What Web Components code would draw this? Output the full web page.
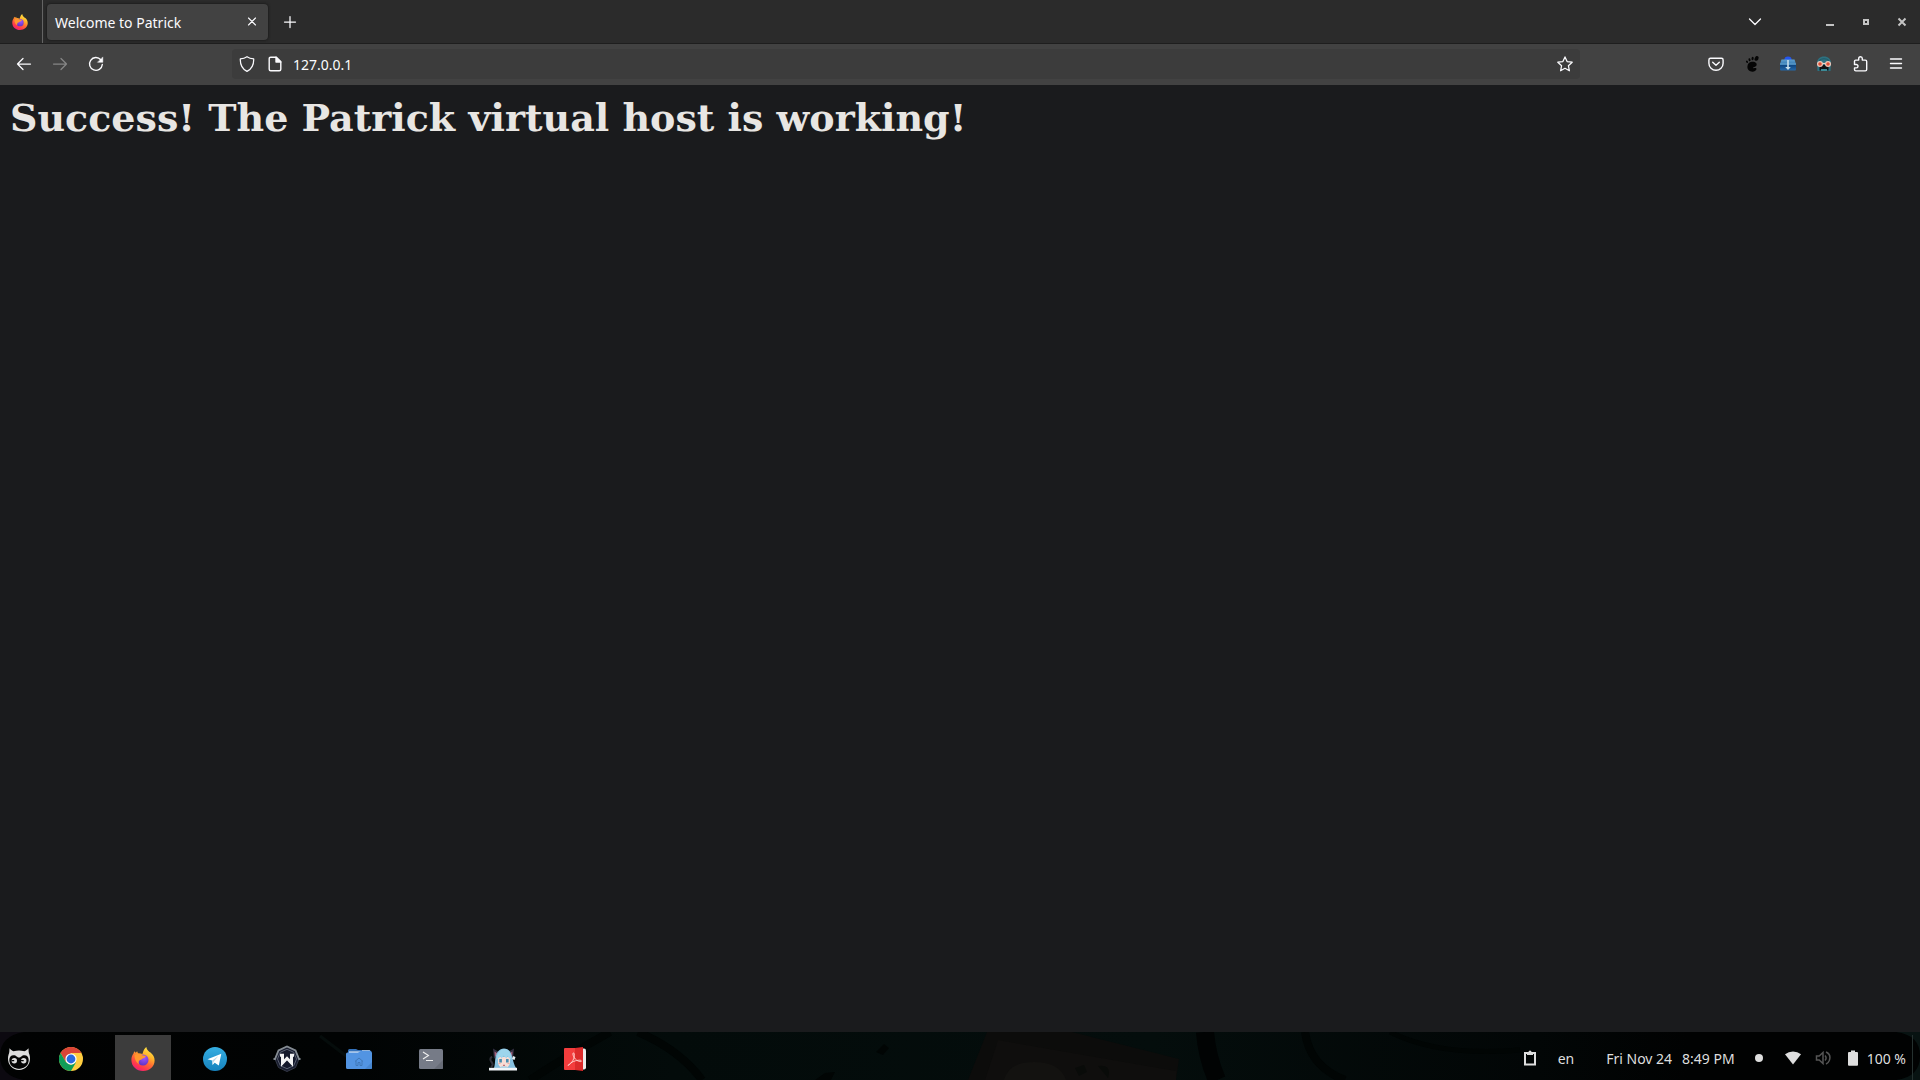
<!DOCTYPE html>
<html lang="en">
<head>
<meta charset="utf-8">
<title>Welcome to Patrick</title>
<style>
html, body { margin: 0; height: 100%; }
body { background: #1a1b1d; font-family: "Noto Sans", sans-serif; font-size: 14px; line-height: 20px; color: #fbfbfe; overflow: hidden; }
</style>
</head>
<body>
<desk-top></desk-top>
<script>
const ICONS = {
  firefox: `<svg viewBox="0 0 24 24"><defs>
    <linearGradient id="f" x1=".85" y1="0" x2=".3" y2="1"><stop offset="0" stop-color="#fff44f"/><stop offset=".35" stop-color="#ffb42a"/><stop offset=".6" stop-color="#ff6a33"/><stop offset=".85" stop-color="#ff3350"/><stop offset="1" stop-color="#e9207e"/></linearGradient>
    <radialGradient id="p" cx=".6" cy=".3" r=".7"><stop offset="0" stop-color="#a056ff"/><stop offset="1" stop-color="#6133c4"/></radialGradient></defs>
    <path fill="url(#f)" d="M15.3 0c.5 2.8 1.7 3.7 3.2 5.1l1 .5c2.6 2.1 4.1 4.4 4.1 8 0 6.2-5.1 10.4-11.6 10.4S.4 19.300.4 13c0-3 .8-5 2.200-6.800l.6-2 1.500 1.500 1.400-1.500.9 2c1.800-.1 3.100.2 4.300.8 1-1.400.8-4.400 4-7z"/>
    <circle cx="12" cy="13" r="5.500" fill="url(#p)"/>
    <path fill="#ff982e" d="M3.500 8.500c2-1.800 5.700-2 7.700-.2l3.700.7c-.4 1.700-2.400 1.900-3.600 2.700-.8 1.100-2.600.9-3.300 2.400-.5 1-.4 2 .2 2.800-2.500-.7-4.600-4.200-4.700-8.400z"/></svg>`,
  back: `<svg viewBox="0 0 16 16" fill="none" stroke="currentColor" stroke-width="1.250" stroke-linecap="round" stroke-linejoin="round"><path d="M14.500 8H1.500M7 2.500 1.500 8 7 13.500"/></svg>`,
  forward: `<svg viewBox="0 0 16 16" fill="none" stroke="currentColor" stroke-width="1.250" stroke-linecap="round" stroke-linejoin="round"><path d="M1.500 8h13M9 2.500 14.500 8 9 13.500"/></svg>`,
  reload: `<svg viewBox="0 0 16 16" fill="none" stroke="currentColor" stroke-width="1.400" stroke-linecap="round"><path d="M14.300 8.500A6.400 6.400 0 1 1 12.800 3.800"/><path d="M14.800 1.300v5h-5z" fill="currentColor" stroke-width=".5"/></svg>`,
  shield: `<svg viewBox="0 0 16 16" fill="none" stroke="currentColor" stroke-width="1.250" stroke-linejoin="round"><path d="M8 .7c2 1.400 4.300 2 6.700 2.200C14.900 8.400 13.300 12.600 8 15.400 2.700 12.600 1.100 8.400 1.300 2.900 3.700 2.700 6 2.100 8 .7z"/></svg>`,
  page: `<svg viewBox="0 0 16 16" fill="none" stroke="currentColor" stroke-width="1.400" stroke-linejoin="round"><path d="M3.700 1.200h5.600l4.500 4.500v7.600q0 1.500-1.500 1.500H3.700q-1.500 0-1.500-1.500V2.700q0-1.500 1.500-1.500z"/><path d="M9 1.200v4.800h4.800z" fill="currentColor"/></svg>`,
  star: `<svg viewBox="0 0 16 16" fill="none" stroke="currentColor" stroke-width="1.250" stroke-linejoin="round"><path d="m8 .9 2.100 4.700 5.100.6-3.800 3.500 1 5.100L8 12.300l-4.400 2.500 1-5.100L.8 6.200l5.100-.6z"/></svg>`,
  close: `<svg viewBox="0 0 16 16" fill="none" stroke="currentColor" stroke-width="1.100" stroke-linecap="round"><path d="m4.500 4 7 7M11.500 4l-7 7"/></svg>`,
  plus: `<svg viewBox="0 0 16 16" fill="none" stroke="currentColor" stroke-width="1.250" stroke-linecap="round"><path d="M8 2.500v11M2.500 8h11"/></svg>`,
  chevron: `<svg viewBox="0 0 16 16" fill="none" stroke="currentColor" stroke-width="1.300" stroke-linecap="round" stroke-linejoin="round"><path d="m2.500 5 5.500 5.500L13.500 5"/></svg>`,
  minimize: `<svg viewBox="0 0 16 16" fill="currentColor"><path d="M4 10h8v2H4z"/></svg>`,
  maximize: `<svg viewBox="0 0 16 16" fill="none" stroke="currentColor" stroke-width="2"><path d="M6 6h4v4H6z"/></svg>`,
  quit: `<svg viewBox="0 0 16 16" fill="none" stroke="currentColor" stroke-width="2"><path d="m4.500 4.500 7 7M11.500 4.500l-7 7"/></svg>`,
  pocket: `<svg viewBox="0 0 16 16" fill="none" stroke="currentColor" stroke-width="1.400" stroke-linecap="round" stroke-linejoin="round"><path d="M2.500 2.300h11q1.600 0 1.600 1.600v3.300a7.100 7.100 0 0 1-14.200 0V3.900q0-1.600 1.600-1.600z"/><path d="M4.700 6.200 8 9.300l3.300-3.100"/></svg>`,
  foot: `<svg viewBox="0 0 16 16" fill="#050505"><path d="M7.800 5.800c3.400-.3 5.900 1.500 4.500 3.900-.9 1.500-3.200 1-3.200 2.100 0 .9 2.200-.4 3.100.4 1 1-.8 3.400-3.400 3.500-3.400.1-5.500-2-5.400-4.900.1-2.900 1.700-4.800 4.400-5z"/><ellipse cx="12.600" cy="2.400" rx="1.800" ry="2.500" transform="rotate(25 12.600 2.400)"/><ellipse cx="8.600" cy="2.500" rx="1.100" ry="1.700" transform="rotate(5 8.600 2.500)"/><ellipse cx="5.500" cy="3.800" rx="1" ry="1.500" transform="rotate(-15 5.500 3.800)"/><ellipse cx="3" cy="5.800" rx=".9" ry="1.300" transform="rotate(-30 3 5.800)"/></svg>`,
  download: `<svg viewBox="0 0 16 16"><defs><linearGradient id="d" x2="0" y2="1"><stop stop-color="#5f9fce"/><stop offset=".45" stop-color="#3379b4"/><stop offset=".5" stop-color="#0c4480"/><stop offset="1" stop-color="#2468a8"/></linearGradient></defs><ellipse cx="8" cy="3.500" rx="3.600" ry="3" fill="#2456ee"/><path d="M1.500 3.500h13L16 8v5.500q0 1-1 1H1q-1 0-1-1V8z" fill="url(#d)"/><path d="M0 8h16" stroke="#7ab4d8" stroke-width=".7"/><path d="M7.200 4h1.600v7h2L8 14l-2.800-3h2z" fill="#c6deec"/></svg>`,
  mask: `<svg viewBox="0 0 16 16"><path d="M1 7c0-4 3-6.500 7-6.500S15 3 15 7l-.5 8H1.500z" fill="#2d7180"/><path d="M3 4.500Q8 1 13 4.500" fill="none" stroke="#205866"/><path d="M3.500 9h9v5.500h-9z" fill="#101316"/><path d="M5 13h6v2H5z" fill="#3d8a96"/><circle cx="4" cy="8" r="3" fill="#efc9bb"/><circle cx="12" cy="8" r="3" fill="#efc9bb"/><circle cx="4" cy="8" r="1.800" fill="#df4f36"/><circle cx="12" cy="8" r="1.800" fill="#df4f36"/><path d="M6.800 7.500h2.400" stroke="#f0d5c8" stroke-width="1.200"/></svg>`,
  puzzle: `<svg viewBox="0 0 16 16" fill="none" stroke="currentColor" stroke-width="1.400" stroke-linejoin="round"><path d="M2.500 5.300q0-1.200 1.200-1.200h3V2.600a1.800 1.800 0 0 1 3.600 0v1.500h3q1.400 0 1.400 1.400v8q0 1.400-1.400 1.400H3.800q-1.300 0-1.300-1.300v-1.700h1.800a1.700 1.700 0 0 0 0-3.400H2.500z"/></svg>`,
  menu: `<svg viewBox="0 0 16 16" fill="none" stroke="currentColor" stroke-width="1.400" stroke-linecap="round"><path d="M2.500 3h11M2.500 7.500h11M2.500 12h11"/></svg>`,
  cat: `<svg viewBox="0 0 24 24"><path fill="#dedede" d="M2.500 1.200c1.300 1.200 2.300 2.600 4.100 3Q12 2.600 17.400 4.200c1.800-.4 2.800-1.800 4.100-3 .2 2.200-.1 4.300.9 6.300C24.800 15 20 23 12 23S-.8 15 1.600 7.500c1-2 .7-4.100.9-6.300z"/><path d="M2.300 13c0-3 1.700-4.700 4.200-4.700 3 0 3.500 2.300 5.500 2.300s2.500-2.300 5.500-2.300c2.500 0 4.200 1.700 4.200 4.700 0 5.200-4.200 8.700-9.700 8.700S2.300 18.200 2.300 13z" fill="#050505"/><path d="M2.800 16Q5.500 21.400 12 21.400t9.200-5.400Q18 19.400 12 19.400T2.800 16z" fill="#050505"/><circle cx="7.300" cy="13.800" r="2.700" fill="#dedede"/><circle cx="16.700" cy="13.800" r="2.700" fill="#dedede"/><path d="M4.500 13.600h2.700M14 13.600h2.700" stroke="#050505" stroke-width="1.400"/></svg>`,
  chrome: `<svg viewBox="0 0 24 24"><circle cx="12" cy="12" r="12" fill="#ffcd40"/><path d="M12 6h10.400A12 12 0 0 0 1.600 6l5.200 9z" fill="#db4437"/><path d="M1.600 6A12 12 0 0 0 12 24l5.200-9-5.200 3-5.200-3z" fill="#0f9d58"/><circle cx="12" cy="12" r="5.600" fill="#fff"/><circle cx="12" cy="12" r="4.400" fill="#2a6ae0"/></svg>`,
  telegram: `<svg viewBox="0 0 24 24"><defs><linearGradient id="t" x2="0" y2="1"><stop stop-color="#35aee2"/><stop offset="1" stop-color="#1682bd"/></linearGradient></defs><circle cx="12" cy="12" r="12" fill="url(#t)"/><path d="m4.500 12.200 13.800-5.400-2.500 11.700-4.100-2.700-2.200 2.100-.3-4.300z" fill="#fff"/><path d="m9.200 13.600 6.200-4.500-4.800 5.600-1.100 3.200z" fill="#b8d6e7"/></svg>`,
  windscribe: `<svg viewBox="0 0 28 28"><path d="m5.500 5.500 8.500-4 8.500 4 3.500 8.500-3.500 8.500-8.500 4-8.500-4L2 14z" fill="#181c2e" stroke="#343947"/><path d="M.5 14H2l3.500-8.500 8.500-4 8.500 4L26 14h1.500" fill="none" stroke="#848b92" stroke-width="1.800"/><path d="M4.500 14 7.300 7.300 14 4.300l6.700 3 2.800 6.700-2.800 6.700-6.700 3-6.700-3z" fill="#14182a" stroke="#596070"/><path d="M7 10.300h2.500v7.700l4.500-4.700 4.500 4.700v-7.700H21" fill="none" stroke="#f2f2f2" stroke-width="3"/></svg>`,
  folder: `<svg viewBox="0 0 26 22"><path d="M2 2.500Q2 1 3.500 1H10l2 1h11q2 0 2 2v5H2z" fill="#3472bb"/><path d="M3 3.500h13V2.600h8v5H3z" fill="#f3f7fc"/><path d="M0 6q0-1.500 1.500-1.500H12l3-1.500h9q2 0 2 2v14.500q0 1.500-1.500 1.500h-23Q0 21 0 19.500z" fill="#5294e2"/><path d="m19 21 7-7v5.500q0 1.500-1.500 1.500z" fill="#4786d0"/><path d="m9 13.500 4-3.500 4 3.500M10 12.800v4.700h2v-3h2v3h2v-4.700" fill="none" stroke="#4078b8" stroke-width="1"/></svg>`,
  terminal: `<svg viewBox="0 0 26 22"><rect x="1" y="1" width="24" height="20" rx="1.500" fill="#767b87"/><path d="m16 21 9-9v7.500q0 1.500-1.500 1.500z" fill="#686d78"/><path d="m5 4 5.500 3.500L5 11M8 12.500h7" fill="none" stroke="#f0f0f0" stroke-width="1.100"/></svg>`,
  anime: `<svg viewBox="0 0 28 24"><path d="M4 1.500 10 5l-5 7zM25 1.500 19 5l5 7z" fill="#342f42"/><path d="m5.500 4.500 3 2L6 10zM23.500 4.500l-3 2L23 10z" fill="#a8607a"/><path d="M2 20q3-2 .5-5T3 9.500" fill="none" stroke="#303039" stroke-width="2"/><path d="M5 21C7 15 5 9 9 4.500c3-4 9-4 12 0 3 5 2.500 10.500 6 16.500z" fill="#86c0df"/><path d="M9 10h12v6q-1 5-6 5t-6-5z" fill="#f8ddd5"/><path d="M7.500 13C8 5 12 2 15.500 2S22.500 5 22.500 13l-3-2.500-1-2-1 3-3-3-2 3.200-1-2.200z" fill="#9dd5ec"/><path d="M10.300 12h2.600v3.500h-2.600zM17 12h2.600v3.500H17z" fill="#4a8dae"/><path d="M9.500 16.500h2M18.500 16.500h2" stroke="#efaba5"/><path d="M14 18.300h2" stroke="#b8545e"/><path d="m24 9 2.500 1-1 3-2.500-1z" fill="#e4edf2"/><path d="M11 21q1-2.500 4-1.500 3-1 4 1.500z" fill="#a5cde1"/><path d="M0 20.800h28v2.700H0z" fill="#f1f5f8"/></svg>`,
  pdf: `<svg viewBox="0 0 24 24"><path d="M18 1.500h3q2 0 2 2v17q0 2-2 2h-3z" fill="#ececec"/><path d="M1 2q0-1 1-1h10v22H2q-1 0-1-1z" fill="#f33d3d"/><path d="m12 1 8-1v24l-8-1z" fill="#dc2b2b"/><path d="M5 18.500c4-2.200 7-7.500 6.200-11.500-.3-2-1.900-1.200-1.100 1.200 1.200 4 5 6.500 7.700 6.400 1.200-.2.700-1.400-1-1.400-3.900 0-8.500 1.500-11.800 5.300z" fill="none" stroke="#ffd7d4" stroke-width=".9"/></svg>`,
  clipboard: `<svg viewBox="0 0 16 16" fill="none" stroke="currentColor"><path d="M3 3h10v11.500H3z" stroke-width="2"/><path d="M5 2h1.500a1.500 1.500 0 0 1 3 0H11v3H5z" fill="currentColor" stroke="none"/></svg>`,
  dot: `<svg viewBox="0 0 16 16"><circle cx="8" cy="8" r="4" fill="currentColor"/></svg>`,
  wifi: `<svg viewBox="0 0 16 16"><path d="M0 4.300Q3.500 1.500 8 1.500t8 2.800L8 14.500z" fill="currentColor"/></svg>`,
  volume: `<svg viewBox="0 0 16 16" fill="none" stroke="#555" stroke-width="1.500"><path d="M1.500 6h2.700L8 2.500v11L4.200 10H1.500zM10 5.500q2.200 2.500 0 5M11 2q5.500 2.500 3.300 8.500Q13.300 13 11 14"/></svg>`,
  battery: `<svg viewBox="0 0 16 16"><path d="M6 .5h4V2h2q1 0 1 1v12q0 .8-1 .8H4q-1 0-1-.8V3q0-1 1-1h2z" fill="currentColor"/></svg>`
};

function define(name, html, setup) {
  const template = document.createElement("template");
  template.innerHTML = html;
  customElements.define(name, class extends HTMLElement {
    constructor() {
      super();
      this.attachShadow({ mode: "open" }).append(template.content.cloneNode(true));
    }
    connectedCallback() { if (setup) setup(this, this.shadowRoot); }
  });
}

define("ui-icon", `<style>
  :host { display: block; width: var(--icon-size, 16px); height: var(--icon-size, 16px); flex: none; }
  div, svg { display: block; width: 100%; height: 100%; }
</style><div></div>`, (el, root) => {
  root.querySelector("div").innerHTML = ICONS[el.getAttribute("name")].replace("<svg", '<svg aria-hidden="true"');
});

define("icon-button", `<style>
  :host { display: flex; width: 36px; flex: none; }
  button { all: unset; box-sizing: border-box; display: grid; place-items: center; width: 100%; height: 100%; color: inherit; }
  button:focus-visible { outline: 1px solid #8ab4f8; outline-offset: -2px; }
  :host([dim]) { color: #858585; }
</style><button type="button"></button>`, (el, root) => {
  const icon = document.createElement("ui-icon");
  icon.setAttribute("name", el.getAttribute("icon"));
  const button = root.querySelector("button");
  button.setAttribute("aria-label", el.getAttribute("label"));
  if (el.hasAttribute("dim")) button.disabled = true;
  button.replaceChildren(icon);
});

define("tab-strip", `<style>
  :host { display: flex; height: 44px; box-sizing: border-box; background: #2b2b2b; border-bottom: 1px solid #1e1e1e; }
  .home { display: grid; place-items: center; width: 40px; padding-right: 2px; border-right: 1px solid #646464; }
  .tab { display: flex; align-items: center; box-sizing: border-box; width: 221px; height: 36px; margin: 4px; padding-left: 8px; border-radius: 4px; background: #424242; box-shadow: 0 0 3px #111; }
  .title { flex: 1; line-height: 22px; padding-top: 2px; white-space: nowrap; }
  .tab icon-button { width: 32px; height: 32px; }
  .list { margin-left: auto; margin-right: 39px; }
  .window { color: #c4c4c4; display: flex; }
</style>
<div class="home"><ui-icon name="firefox"></ui-icon></div>
<div class="tab" role="tab" aria-selected="true"><span class="title">Welcome to Patrick</span><icon-button icon="close" label="Close tab"></icon-button></div>
<icon-button icon="plus" label="New tab"></icon-button>
<icon-button class="list" icon="chevron" label="List all tabs"></icon-button>
<div class="window"><icon-button icon="minimize" label="Minimize"></icon-button><icon-button icon="maximize" label="Maximize"></icon-button><icon-button icon="quit" label="Close"></icon-button></div>`);

define("address-bar", `<style>
  :host { display: flex; align-items: center; flex: 1; min-width: 0; height: 30px; padding-left: 1px; box-sizing: border-box; border-radius: 4px; background: #3c3c3c; }
  icon-button { width: 28px; height: 30px; }
  .star { width: 30px; }
  input { all: unset; flex: 1; min-width: 0; height: 30px; padding-left: 4px; font: inherit; color: #fbfbfe; }
</style>
<icon-button icon="shield" label="Tracking protection"></icon-button><icon-button icon="page" label="Site information"></icon-button>
<input type="text" aria-label="Address" value="127.0.0.1"><icon-button class="star" icon="star" label="Bookmark this page"></icon-button>`);

define("nav-bar", `<style>
  :host { display: flex; align-items: center; height: 41px; box-sizing: border-box; padding: 0 6px 1px; background: #424242; }
  icon-button { height: 36px; }
  address-bar { margin: 0 118px; }
</style>
<icon-button icon="back" label="Back"></icon-button><icon-button icon="forward" label="Forward" dim></icon-button><icon-button icon="reload" label="Reload"></icon-button>
<address-bar></address-bar>
<icon-button icon="pocket" label="Pocket"></icon-button><icon-button icon="foot" label="GNOME integration"></icon-button><icon-button icon="download" label="Downloader"></icon-button><icon-button icon="mask" label="Mask"></icon-button><icon-button icon="puzzle" label="Extensions"></icon-button><icon-button icon="menu" label="Menu"></icon-button>`);

define("web-page", `<style>
  :host { display: block; flex: 1; min-height: 0; padding: 10px; background: #1a1b1d; }
  ::slotted(h1) { margin: 0; font: bold 38px/46px "DejaVu Serif", serif; color: #e8e6e3; }
</style><slot></slot>`);

define("panel-wallpaper", `<style>
  :host { display: block; overflow: hidden; }
  svg { display: block; width: 100%; height: 100%; }
</style><svg viewBox="0 0 1920 48" preserveAspectRatio="none" aria-hidden="true">
<defs><linearGradient id="g"><stop stop-color="#010202"/><stop offset=".18" stop-color="#010303"/><stop offset=".35" stop-color="#030b0a"/><stop offset=".6" stop-color="#040d0c"/><stop offset=".8" stop-color="#020606"/><stop offset=".88" stop-color="#010202"/><stop offset="1" stop-color="#010202"/></linearGradient></defs>
<rect width="1920" height="48" fill="url(#g)"/>
<g fill="none" stroke="#010504" stroke-width="8"><path d="M530 48Q565 25 610 0M638 0q42 18 64 48M1305 0q5 35 40 48"/><path d="M1205 0q2 25 12 48" stroke="#010303" stroke-width="18"/><path d="M1390 0q50 25 130 18" stroke-width="5"/></g>
<path d="M320 4l42 32" stroke="#050c0b" stroke-width="3"/>
<path d="M987 0h85l107 27-3 21H968z" fill="#0c0c0b"/><path d="m998 8 178 31v9H985z" fill="#0f0e0d"/>
<path d="M1004 48q4-18 30-18t32 18z" fill="#131210"/><path d="m1075 36 9-3 3 7-8 4zM1098 34q14-2 10 12" fill="#090b09"/>
<path d="m876 20 8-8 5 4-6 7zM815 48l10-7 10-1-4 8z" fill="#010504"/>
<path d="M0 0h24Q0 4 0 24zM0 48V24q0 20 24 24z" fill="#0c0910"/><path d="M1896 0h24v48h-24q24-3 24-24t-24-24z" fill="#081312"/>
</svg>`);

define("app-launcher", `<style>
  :host { display: block; width: 56px; height: 45px; padding-top: 3px; box-sizing: border-box; --icon-size: 24px; }
  :host([active]) { background: #3c3c3c; }
  :host([large]) { --icon-size: 28px; }
  :host([medium]) { --icon-size: 26px; }
  div { display: contents; }
  icon-button { width: 100%; height: 100%; }
</style><div></div>`, (el, root) => {
  const button = document.createElement("icon-button");
  button.setAttribute("icon", el.getAttribute("icon"));
  button.setAttribute("label", el.getAttribute("label"));
  root.querySelector("div").replaceChildren(button);
});

define("system-tray", `<style>
  :host { display: flex; align-items: center; height: 45px; color: #dedede; white-space: nowrap; }
  span { padding-top: 2px; }
  ui-icon { padding-top: 1px; }
  .lang { margin: 0 32px 0 20px; }
  .time { margin: 0 16px 0 10px; }
  .wifi { margin: 0 14px 0 18px; }
  .volume { margin-right: 14px; }
  .percent { margin: 0 6px 0 6px; }
  .edge { align-self: stretch; width: 1px; margin-right: 7px; background: #25302f; }
</style>
<ui-icon name="clipboard"></ui-icon><span class="lang">en</span><span>Fri Nov 24</span><span class="time">8:49 PM</span>
<ui-icon name="dot"></ui-icon><ui-icon class="wifi" name="wifi"></ui-icon><ui-icon class="volume" name="volume"></ui-icon><ui-icon name="battery"></ui-icon><span class="percent">100 %</span><span class="edge"></span>`);

define("task-bar", `<style>
  :host { display: grid; height: 48px; flex: none; }
  panel-wallpaper, .row { grid-area: 1 / 1; min-width: 0; }
  panel-wallpaper { height: 48px; }
  .row { display: flex; align-items: flex-end; z-index: 1; }
  .start { width: 38px; margin-right: 5px; }
  .apps { display: flex; gap: 16px; }
  system-tray { margin-left: auto; }
</style>
<panel-wallpaper></panel-wallpaper>
<div class="row"><app-launcher class="start" icon="cat" label="Applications"></app-launcher>
<div class="apps"><app-launcher icon="chrome" label="Chrome"></app-launcher><app-launcher active icon="firefox" label="Firefox"></app-launcher><app-launcher icon="telegram" label="Telegram"></app-launcher><app-launcher large icon="windscribe" label="Windscribe"></app-launcher><app-launcher medium icon="folder" label="Files"></app-launcher><app-launcher medium icon="terminal" label="Terminal"></app-launcher><app-launcher large icon="anime" label="Wallpaper"></app-launcher><app-launcher icon="pdf" label="PDF reader"></app-launcher></div>
<system-tray></system-tray></div>`);

define("desk-top", `<style>:host { display: flex; flex-direction: column; height: 100vh; }</style>
<tab-strip></tab-strip><nav-bar></nav-bar><web-page><h1>Success! The Patrick virtual host is working!</h1></web-page><task-bar></task-bar>`);
</script>
</body>
</html>
